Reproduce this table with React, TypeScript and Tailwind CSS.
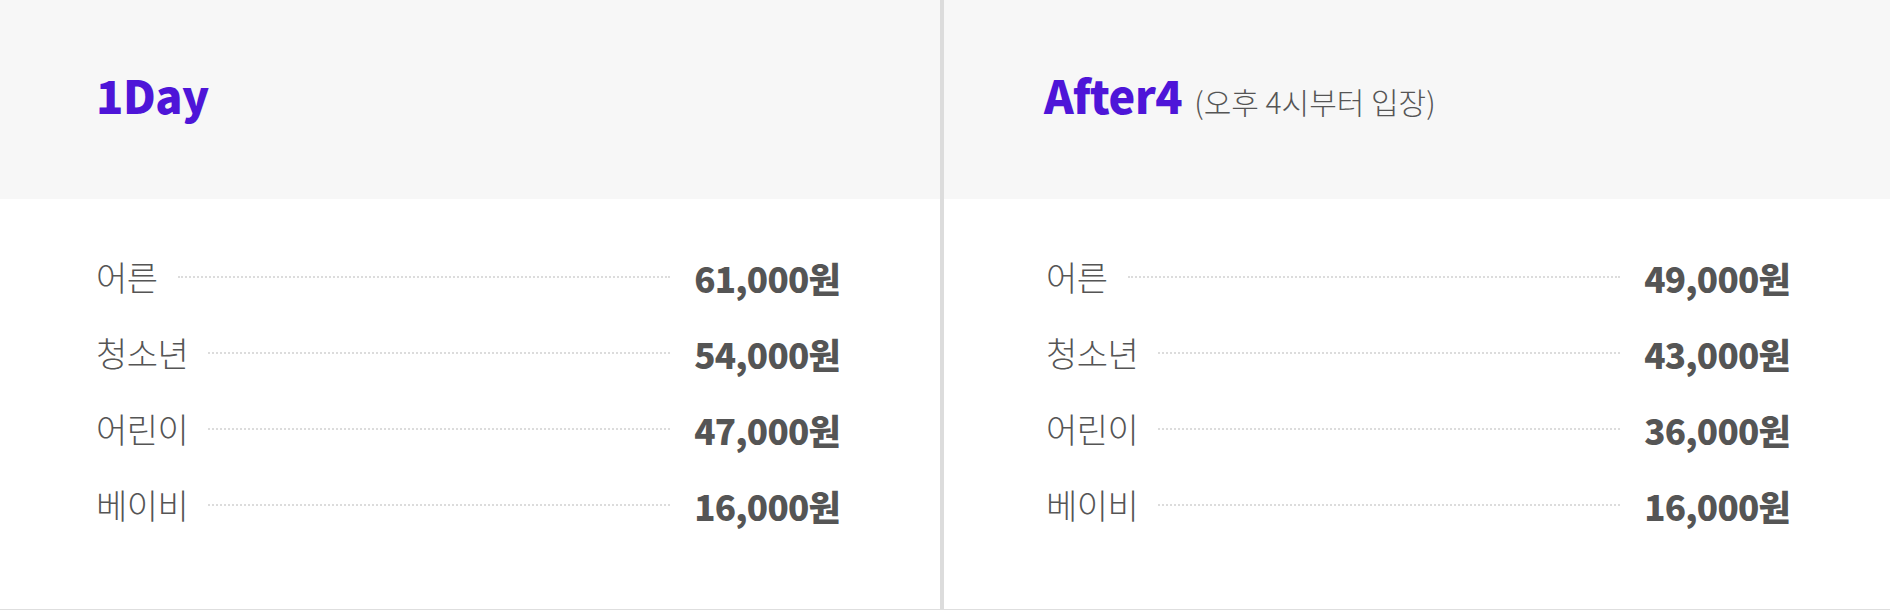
import React from "react";

type Row = { label: string; price: string };

const col1: Row[] = [
  { label: "어른", price: "61,000원" },
  { label: "청소년", price: "54,000원" },
  { label: "어린이", price: "47,000원" },
  { label: "베이비", price: "16,000원" },
];

const col2: Row[] = [
  { label: "어른", price: "49,000원" },
  { label: "청소년", price: "43,000원" },
  { label: "어린이", price: "36,000원" },
  { label: "베이비", price: "16,000원" },
];

function Rows({ rows }: { rows: Row[] }) {
  return (
    <ul className="flex flex-col">
      {rows.map((r) => (
        <li key={r.label} className="flex h-[76px] items-center">
          <span className="text-[34px] font-light leading-none tracking-[-0.5px] text-[#555]">{r.label}</span>
          <span className="ml-5 mr-6 h-0 flex-1 border-t-2 border-dotted border-[#dcdcdc]" />
          <span className="text-[35px] font-black leading-none tracking-[-0.75px] text-[#555]">{r.price}</span>
        </li>
      ))}
    </ul>
  );
}

export default function App() {
  return (
    <div
      className="flex h-[610px] w-[1890px] border-b border-[#dedede] bg-white"
      style={{ fontFamily: '"Noto Sans CJK KR", "Noto Sans", sans-serif' }}
    >
      <section className="flex w-[940px] flex-col">
        <div className="flex h-[199px] items-center bg-[#f7f7f7] pb-[10px] pl-[96px]">
          <h2 className="text-[45px] font-black leading-none tracking-[-0.5px] text-[#4e15d8]">1Day</h2>
        </div>
        <div className="pl-[96px] pr-[100px] pt-[40px]">
          <Rows rows={col1} />
        </div>
      </section>
      <div className="w-[4px] bg-[#dcdcdc]" />
      <section className="flex flex-1 flex-col">
        <div className="flex h-[199px] items-center bg-[#f7f7f7] pb-[10px] pl-[100px]">
          <h2 className="flex items-baseline leading-none">
            <span className="text-[45px] font-black tracking-[-0.5px] text-[#4e15d8]">After4</span>
            <span className="ml-[12px] text-[30px] font-light text-[#555]">(오후 4시부터 입장)</span>
          </h2>
        </div>
        <div className="pl-[102px] pr-[100px] pt-[40px]">
          <Rows rows={col2} />
        </div>
      </section>
    </div>
  );
}
